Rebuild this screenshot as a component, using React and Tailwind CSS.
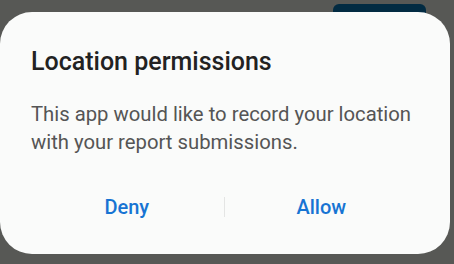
import React from "react";

const App = () => {
  return (
    <div className="relative w-[454px] h-[264px] overflow-hidden bg-[#575855] pt-[12px] font-['Roboto',sans-serif]">
      {/* button peeking behind the sheet */}
      <div className="absolute left-[333px] top-[4px] w-[93px] h-[24px] rounded-[6px] bg-[#022b42]" />
      <div className="relative w-[450px] h-[242px] rounded-[32px] bg-[#fafbfa] pt-[35px]">
        <h1 className="px-[31px] text-[25px] leading-[30px] font-medium text-[#222222]">
          Location permissions
        </h1>
        <p className="mt-[23px] px-[31px] text-[20.3px] leading-[28px] text-[#555555]">
          This app would like to record your location with your report
          submissions.
        </p>
        <div className="mt-[39px] flex items-center pl-[30px] pr-[32px]">
          <button className="flex-1 text-center text-[20px] leading-[24px] font-medium text-[#1774d3]">
            Deny
          </button>
          <div className="w-[1px] h-[20px] bg-[#e4e5e4]" />
          <button className="flex-1 text-center text-[20px] leading-[24px] font-medium text-[#1774d3]">
            Allow
          </button>
        </div>
      </div>
    </div>
  );
};

export default App;
